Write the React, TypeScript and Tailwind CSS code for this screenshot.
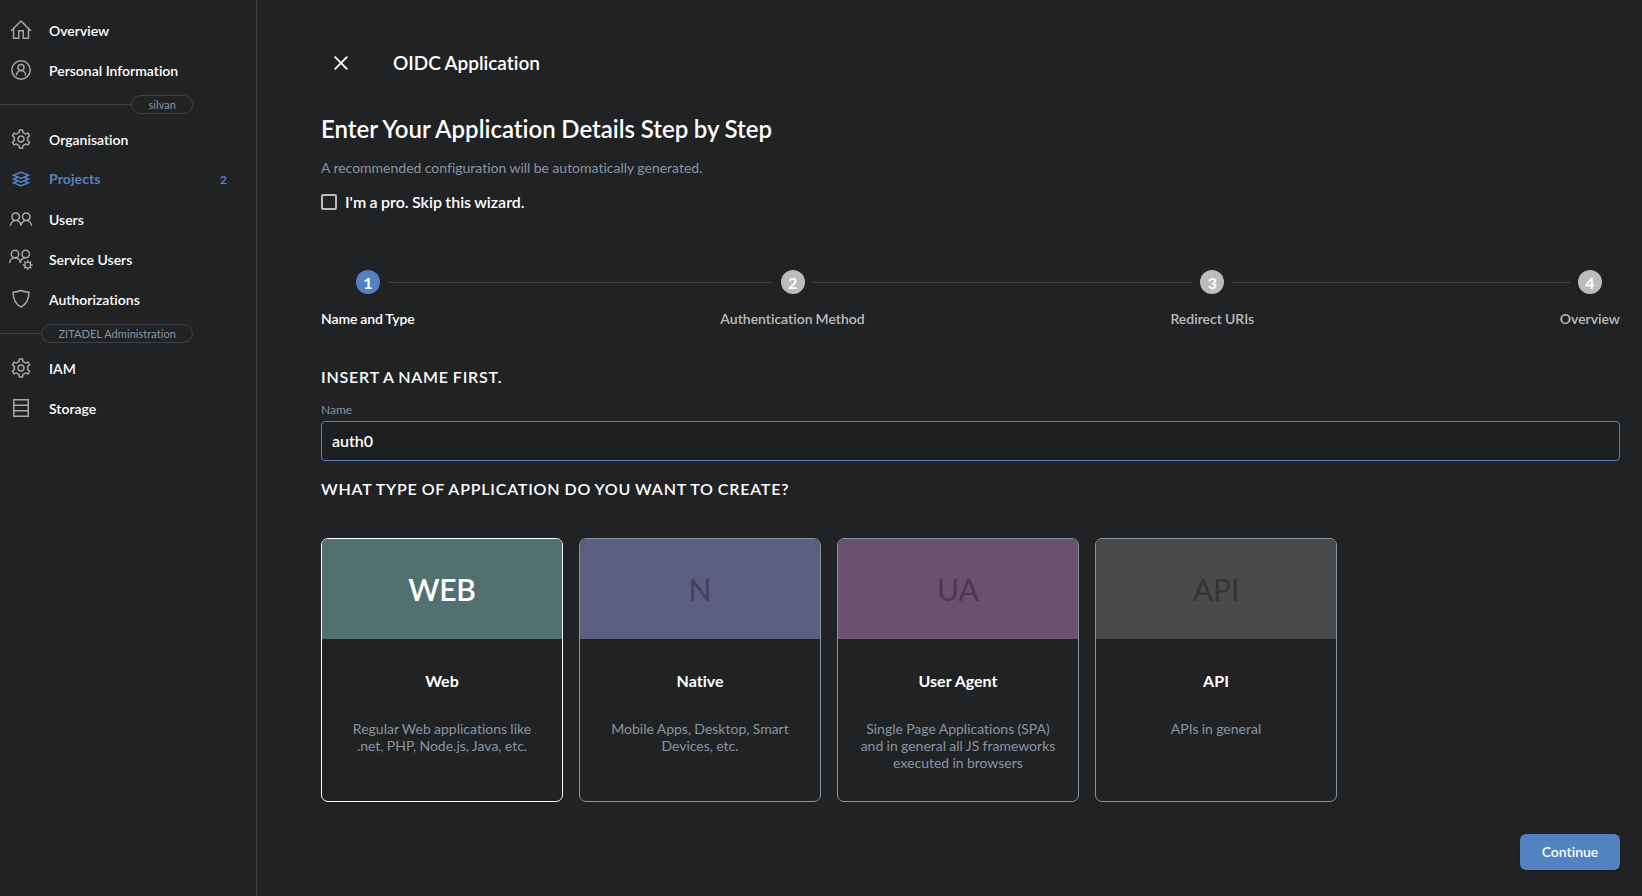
import React, { Fragment } from "react";
import { LiaHomeSolid, LiaCogSolid, LiaLayerGroupSolid, LiaUserFriendsSolid } from "react-icons/lia";

const iconClass = "size-6";

function Svg({ children }: { children: React.ReactNode }) {
  return (
    <svg viewBox="0 0 24 24" className="size-6 overflow-visible" fill="none" stroke="currentColor" strokeWidth="1.5">
      {children}
    </svg>
  );
}

const PersonIcon = () => (
  <Svg>
    <circle cx="12" cy="12" r="9.2" />
    <circle cx="12" cy="9.6" r="3" />
    <path d="M7.5 17.4c0-2.7 1.9-4.8 4.5-4.8s4.5 2.1 4.5 4.8" />
  </Svg>
);

const ServiceUsersIcon = () => (
  <Svg>
    <circle cx="6" cy="7" r="3.7" />
    <circle cx="16.7" cy="7" r="3.7" />
    <path d="M.7 16c0-3 2.3-5.3 5.3-5.3s5.3 2.3 5.3 5.3c0-3 2.3-4.9 5-5.3" />
    <circle cx="18.7" cy="18" r="2.9" strokeWidth="1.3" />
    <path strokeWidth="1.3" d="M18.7 13v2.1M18.7 20.9V23M13.7 18h2.1M21.6 18h2.1M15.2 14.5l1.5 1.5M20.7 20l1.5 1.5M15.2 21.5l1.5-1.5M20.7 16l1.5-1.5" />
  </Svg>
);

const ShieldIcon = () => (
  <Svg>
    <path d="M12 3.500c2.400 1.200 5 1.600 7.900 1.800 0 7-1.800 11.600-7.900 14.900-6.100-3.300-7.900-7.900-7.900-14.900 2.900-.2 5.500-.6 7.900-1.800z" />
  </Svg>
);

const StorageIcon = () => (
  <Svg>
    <path d="M4.75 3.75h14.5v16.5H4.75zM4.75 9.25h14.5M4.75 14.75h14.5" />
  </Svg>
);

function NavItem({ icon, label, active, count }: { icon: React.ReactNode; label: string; active?: boolean; count?: string }) {
  return (
    <a className={`flex h-10 items-center pl-[9px] pr-[29px] ${active ? "text-[#5282c1]" : "text-white"}`}>
      <span className={`flex w-10 ${active ? "" : "text-[#a6a8aa]"}`}>{icon}</span>
      <span className={`text-[14px] leading-5 ${active ? "font-bold tracking-[0.1px]" : "pt-[2px] font-semibold"}`}>{label}</span>
      {count && <span className="ml-auto pt-px text-[12px] font-bold leading-5">{count}</span>}
    </a>
  );
}

function Divider({ label }: { label: string }) {
  return (
    <div className="flex h-[29px] items-center pr-[63px]">
      <div className="h-px flex-1 bg-[#3e4145]" />
      <span className="flex h-[19px] items-center rounded-full border border-[#3e4145] px-4 pt-px text-[11px] tracking-[0.06px] text-[#8795a1]">{label}</span>
    </div>
  );
}

const steps = ["Name and Type", "Authentication Method", "Redirect URIs", "Overview"];

const types = [
  { tag: "WEB", title: "Web", text: "Regular Web applications like .net, PHP, Node.js, Java, etc.", border: "border-white", head: "bg-[#51706f] text-white font-semibold tracking-[-0.3px]" },
  { tag: "N", title: "Native", text: "Mobile Apps, Desktop, Smart Devices, etc.", border: "border-[#8795a1]", head: "bg-[#5c5e81] text-[#41435c]" },
  { tag: "UA", title: "User Agent", text: "Single Page Applications (SPA) and in general all JS frameworks executed in browsers", border: "border-[#8795a1]", head: "bg-[#6c506f] text-[#4b394e]" },
  { tag: "API", title: "API", text: "APIs in general", border: "border-[#8795a1]", head: "bg-[#4a4a4a] text-[#343434]" },
];

export default function App() {
  return (
    <div className="flex h-[896px] w-full overflow-hidden bg-[#212224] font-['Lato',sans-serif] text-white [font-variant-ligatures:none]">
      <aside className="w-[257px] shrink-0 border-r border-[#3e4145] pt-[10px]">
        <NavItem icon={<LiaHomeSolid className={iconClass} />} label="Overview" />
        <NavItem icon={<PersonIcon />} label="Personal Information" />
        <Divider label="silvan" />
        <NavItem icon={<LiaCogSolid className={iconClass} />} label="Organisation" />
        <NavItem icon={<LiaLayerGroupSolid className={iconClass} />} label="Projects" active count="2" />
        <NavItem icon={<LiaUserFriendsSolid className={iconClass} />} label="Users" />
        <NavItem icon={<ServiceUsersIcon />} label="Service Users" />
        <NavItem icon={<ShieldIcon />} label="Authorizations" />
        <Divider label="ZITADEL Administration" />
        <NavItem icon={<LiaCogSolid className={iconClass} />} label="IAM" />
        <NavItem icon={<StorageIcon />} label="Storage" />
      </aside>

      <main className="flex-1 pl-16 pr-[22px] pt-[43px]">
        <div className="flex h-10 items-center">
          <svg viewBox="0 0 14 14" className="ml-[13px] size-[14px]" stroke="white" strokeWidth="1.8">
            <path d="M.7.7l12.6 12.6M13.3.7.7 13.3" />
          </svg>
          <span className="ml-[45px] text-[19px] font-semibold leading-6 [word-spacing:-0.5px]">OIDC Application</span>
        </div>

        <h1 className="mt-[30px] text-[24px] font-semibold leading-8 [word-spacing:-0.4px]">Enter Your Application Details Step by Step</h1>
        <p className="mt-[13px] text-[14px] leading-5 text-[#8795a1] [word-spacing:-0.2px]">A recommended configuration will be automatically generated.</p>
        <label className="mt-[14px] flex h-5 items-center">
          <span className="size-4 rounded-[2px] border-2 border-[#bcbcbd]" />
          <span className="ml-2 text-[16px] font-semibold [word-spacing:-0.6px]">I'm a pro. Skip this wizard.</span>
        </label>

        <div className="mt-[58px] flex">
          {steps.map((label, i) => (
            <Fragment key={label}>
              {i > 0 && <div className="mt-3 h-px flex-1 bg-[#3e4145]" />}
              <div className="flex flex-col">
                <div className="flex h-6 items-start gap-2">
                  <div className={`mt-3 h-px flex-1 ${i > 0 ? "bg-[#3e4145]" : ""}`} />
                  <div className={`flex size-6 items-center justify-center rounded-full pt-[2px] text-[16px] font-bold leading-5 ${i === 0 ? "bg-[#5282c1]" : "bg-[#bcbcbd]"}`}>{i + 1}</div>
                  <div className={`mt-3 h-px flex-1 ${i < 3 ? "bg-[#3e4145]" : ""}`} />
                </div>
                <span className={`mt-[15px] text-[14px] font-semibold leading-5 ${i === 0 ? "text-white tracking-[-0.1px] [word-spacing:-0.4px]" : "text-[#bcbcbd] [word-spacing:-0.4px]"}`}>{label}</span>
              </div>
            </Fragment>
          ))}
        </div>

        <h2 className="mt-[38px] text-[16px] font-semibold uppercase leading-5 tracking-[0.8px] [word-spacing:-0.8px]">Insert a name first.</h2>
        <div className="mt-[15px] text-[12px] leading-4 text-[#8795a1]">Name</div>
        <div className="mt-[3px] flex h-10 items-center rounded-[4px] border border-[#5282c1] bg-[#1d1e20] px-[10px] text-[16px] font-semibold">auth0</div>
        <h2 className="mt-[18px] text-[16px] font-semibold uppercase leading-5 tracking-[0.8px] [word-spacing:-0.7px]">What type of application do you want to create?</h2>

        <div className="mt-[39px] flex gap-4">
          {types.map((t) => (
            <div key={t.tag} className={`h-[264px] w-[242px] overflow-hidden rounded-[7px] border text-center ${t.border}`}>
              <div className={`flex h-[100px] items-center justify-center pt-px text-[30px] ${t.head}`}>{t.tag}</div>
              <div className="mt-[32px] text-[16px] font-bold leading-5">{t.title}</div>
              <p className="mx-5 mt-[29px] text-[14px] leading-[17px] text-[#8795a1] [word-spacing:-0.3px]">{t.text}</p>
            </div>
          ))}
        </div>

        <div className="mt-8 flex justify-end">
          <button className="h-9 w-[100px] rounded-[6px] bg-[#5282c1] pb-[2px] text-[14px] font-semibold shadow-md">Continue</button>
        </div>
      </main>
    </div>
  );
}
